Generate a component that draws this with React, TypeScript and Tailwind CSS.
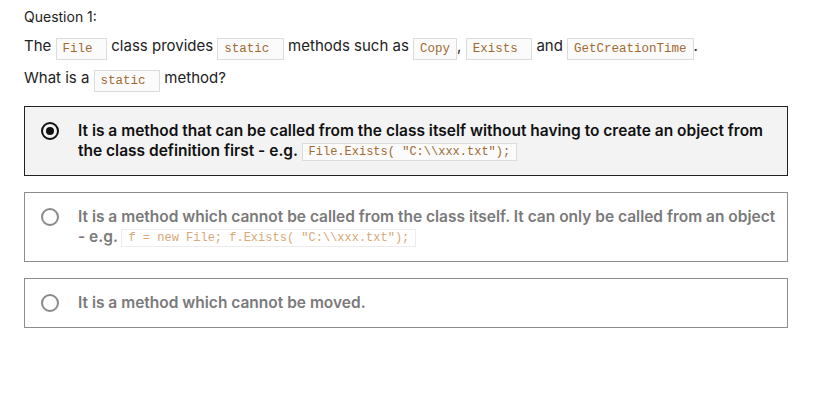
import { ReactNode } from 'react';

function Code({ children, muted = false, small = false }: { children: ReactNode; muted?: boolean; small?: boolean }) {
  return (
    <code
      className={`inline-block border px-1.5 font-normal font-['Liberation_Mono',monospace] whitespace-pre ${
        small ? 'align-[1px] text-[12px] leading-[16px]' : 'align-[-1px] text-[12.5px] leading-[20px]'
      } ${muted ? 'border-[#ececec] bg-white text-[#d9a877]' : 'border-[#dcdcdc] bg-[#fbfbfb] text-[#a06a32]'}`}
    >
      {children}
    </code>
  );
}

function Radio({ checked }: { checked: boolean }) {
  return (
    <span
      className={`mt-[1px] flex h-[18px] w-[18px] shrink-0 items-center justify-center rounded-full border-2 ${
        checked ? 'border-[#111]' : 'border-[#8a8a8a]'
      }`}
    >
      {checked && <span className="h-[8px] w-[8px] rounded-full bg-[#111]" />}
    </span>
  );
}

type Option = { text: ReactNode; checked: boolean };

const options: Option[] = [
  {
    checked: true,
    text: (
      <>
        It is a method that can be called from the class itself without having to create an object from the class
        definition first - e.g. <Code small>File.Exists( "C:\\xxx.txt");</Code>
      </>
    ),
  },
  {
    checked: false,
    text: (
      <>
        It is a method which cannot be called from the class itself. It can only be called from an object - e.g.{' '}
        <Code small muted>f = new File; f.Exists( "C:\\xxx.txt");</Code>
      </>
    ),
  },
  { checked: false, text: <>It is a method which cannot be moved.</> },
];

export default function App() {
  return (
    <div className="min-h-[402px] w-[836px] bg-white px-6 pt-[7px] font-['Inter',sans-serif] text-[#222]">
      <p className="text-[14px] leading-[20px]">Question 1:</p>
      <p className="mt-[8px] text-[15px] leading-[22px]">
        The <Code>File </Code> class provides <Code>static </Code> methods such as <Code>Copy</Code>,{' '}
        <Code>Exists </Code> and <Code>GetCreationTime</Code>.
      </p>
      <p className="mt-[7px] text-[15px] leading-[22px]">
        What is a <Code>static </Code> method?
      </p>

      <div className="mt-[14px] flex w-[764px] flex-col gap-[16px]">
        {options.map((o, i) => (
          <div
            key={i}
            className={`flex gap-[19px] border py-[14px] pl-4 pr-2 ${
              o.checked ? 'border-[#222] bg-[#f3f3f3] text-[#111]' : 'border-[#8c8c8c] bg-white text-[#7a7a7a]'
            }`}
          >
            <Radio checked={o.checked} />
            <p className="text-[15.5px] font-semibold leading-[20px]">{o.text}</p>
          </div>
        ))}
      </div>
    </div>
  );
}
